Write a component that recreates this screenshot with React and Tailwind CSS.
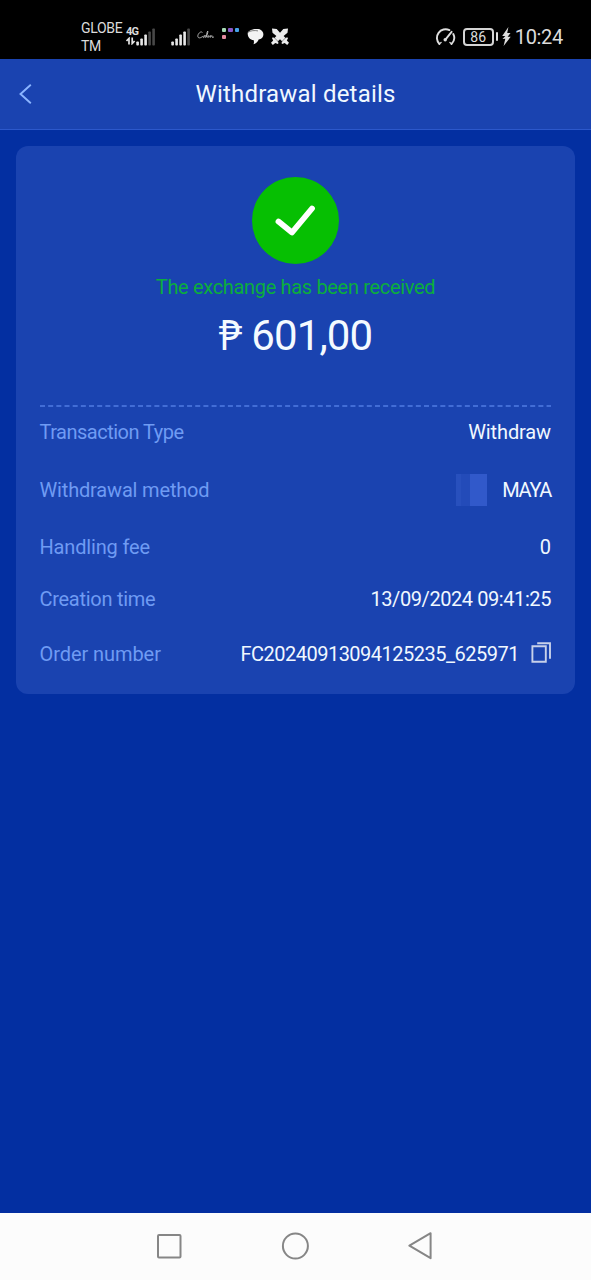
const rows = [
  { label: 'Transaction Type', value: 'Withdraw', height: 'h-[50px]', labelTracking: 'tracking-[-0.5px]', valueTracking: 'tracking-[-0.12px]' },
  { label: 'Withdrawal method', value: 'MAYA', height: 'h-[65px]', labelTracking: 'tracking-[-0.17px]', valueTracking: 'tracking-[-1.3px]', logo: true },
  { label: 'Handling fee', value: '0', height: 'h-[50px]', labelTracking: 'tracking-[-0.17px]', valueTracking: 'tracking-[0px]' },
  { label: 'Creation time', value: '13/09/2024 09:41:25', height: 'h-[53px]', labelTracking: 'tracking-[-0.28px]', valueTracking: 'tracking-[-0.42px]' },
  { label: 'Order number', value: 'FC20240913094125235_625971', height: 'h-[57px]', labelTracking: 'tracking-[-0.07px]', valueTracking: 'tracking-[-0.5px]', copy: true },
]

export default function App() {
  return (
    <div className="flex flex-col w-[591px] h-[1280px] bg-[#032fa1] font-[Roboto,sans-serif] overflow-hidden">
      <StatusBar />
      <header className="grid grid-cols-[1fr_auto_1fr] items-center h-[71px] bg-[#1a43b0] border-b border-[#2c58cb]">
        <svg className="ml-[18px] w-[15px] h-5" viewBox="0 0 15 20" fill="none" stroke="#8bb5ff" strokeWidth="1.9">
          <path d="M12.8 .8 2.5 10l10.3 9.2" />
        </svg>
        <h1 className="text-2xl text-[#f0f8ff] tracking-[0.2px]">Withdrawal details</h1>
      </header>

      <main className="flex-1 px-4 pt-4">
        <section className="h-[548px] rounded-xl bg-[#1a43b0] px-6 pt-[31px]">
          <div className="flex flex-col items-center h-[228px]">
            <svg className="w-[87px] h-[87px] shrink-0" viewBox="0 0 87 87" fill="none">
              <circle cx="43.5" cy="43.5" r="43.5" fill="#06bf02" />
              <path d="M26.5 44.5 40 55.5l20-24" stroke="#fff" strokeWidth="5.8" strokeLinecap="round" strokeLinejoin="round" />
            </svg>
            <p className="mt-[9px] text-[20px] leading-[28px] tracking-[-0.33px] text-[#0bae3c] whitespace-nowrap">The exchange has been received</p>
            <p className="flex items-baseline gap-[9px] mt-[8px] text-[42px] leading-[50px] text-[#f4faff] whitespace-nowrap">
              <span className="font-['Noto_Sans',sans-serif] text-[41px] leading-[50px]">₱</span>
              <span className="tracking-[-0.9px]">601,00</span>
            </p>
          </div>
          <Dashes />
          {rows.map(r => <Row key={r.label} {...r} />)}
        </section>
      </main>

      <NavBar />
    </div>
  )
}

function Row({ label, value, height, labelTracking, valueTracking, logo, copy }) {
  return (
    <div className={`flex items-center justify-between text-[20px] whitespace-nowrap ${height}`}>
      <span className={`-ml-[0.5px] text-[#6f9bf3] ${labelTracking}`}>{label}</span>
      <div className="flex items-center text-[#f0f8ff]">
        {logo && (
          <span className="flex w-[31px] h-8 mr-[15px]">
            <span className="w-[5px] bg-[#2850bd]" />
            <span className="w-[9px] bg-[#234bb9]" />
            <span className="flex-1 bg-[#3159ca]" />
          </span>
        )}
        <span className={valueTracking}>{value}</span>
        {copy && (
          <svg className="ml-3 -mt-[2px] w-5 h-[21px]" viewBox="0 0 20 21" fill="none" stroke="#c7d1ea" strokeWidth="1.9">
            <path d="M1.4 4.3h13.4v15.4H1.4zM6.2 1.2H19v15.6" />
          </svg>
        )}
      </div>
    </div>
  )
}

function Dashes() {
  return (
    <svg className="block w-full h-[2px]" viewBox="0 0 511 2" preserveAspectRatio="none">
      <path d="M0 1h511" stroke="#507ce2" strokeWidth="1.5" strokeDasharray="5 3.17" />
    </svg>
  )
}

function StatusBar() {
  return (
    <div className="flex items-center h-[59px] shrink-0 bg-black text-[#dcdcdc] pt-[14px] pl-[81px] pr-[28px]">
      <div className="w-[43px] text-[14px] leading-[18px] tracking-[-0.3px]">
        <div>GLOBE</div>
        <div>TM</div>
      </div>
      <div className="w-3 -mt-[1px]">
        <div className="pl-[2px] text-[11px] leading-[10px] font-bold tracking-[-0.8px]">4G</div>
        <svg className="ml-[2px] w-[10px] h-[8px]" viewBox="0 0 10 8" fill="none" stroke="#e4e4e4" strokeWidth="1.7">
          <path d="M3 7.5v-6L.5 4M6.2 .5v6L8.6 4" />
        </svg>
      </div>
      <Signal faded={2} />
      <div className="w-[15px]" />
      <Signal faded={1} />
      {/* Calm */}
      <svg className="ml-[6px] -mt-[3px] w-[18px] h-[10px]" viewBox="0 0 18 10" fill="none" stroke="#bdbdbd" strokeWidth=".9" strokeLinecap="round" strokeLinejoin="round">
        <path d="M5.2 2.2C4.6.6.8 3.2.8 6.2c.2 2.6 3 1.8 4.6.4M8.2 5.6c-1.2-.4-2.4.8-2 1.8.6.6 1.6-.4 2-1.8-.2 1.2 0 1.9.5 1.8C9.8 6.6 11.2 2 10.8 1c-.8.2-1.8 5.6-.8 6.4.8 0 1-1.8 1.7-1.8.4.2 0 1.2 0 1.8.5-.8 1-1.9 1.7-1.8.4.3 0 1.2 0 1.8.5-.8 1-1.9 1.7-1.7.4.4-.2 1.6.4 1.8.4 0 .8-.2 1.2-.5" />
      </svg>
      <div className="grid grid-cols-3 gap-x-[2px] gap-y-[3px] ml-[7px] -mt-[6px] w-[17px]">
        <span className="h-[4px] rounded-[1px] bg-[#a6d9b5]" />
        <span className="h-[4px] rounded-[1px] bg-[#8857c9]" />
        <span className="h-[4px] rounded-[1px] bg-[#45a2e8]" />
        <span className="h-[4px] rounded-[1px] bg-[#e58ba0]" />
      </div>
      <ChatIcon />
      <SwordsIcon />

      <div className="flex items-center ml-auto">
        <svg className="w-[21px] h-[18px]" viewBox="0 0 21 18" fill="none" stroke="#dedede" strokeWidth="1.9" strokeLinecap="round">
          <path d="M4.4 16A8.7 8.7 0 0 1 14.4 2.1M18.3 6a8.7 8.7 0 0 1-1.8 10" />
          <path d="m10.4 11.6 6.2-7.8" />
          <circle cx="10.2" cy="11.8" r="1.7" fill="#dedede" stroke="none" />
          <path d="m4.5 15.8 1.6-1.3M16.4 15.8l-1.5-1.3" strokeWidth="1.3" />
        </svg>
        <div className="flex items-center justify-center ml-[7px] w-[31px] h-[18px] rounded-[4px] border-2 border-[#d4d4d4] text-[14px] leading-[14px]">86</div>
        <span className="ml-[2px] w-[2px] h-[9px] rounded-full bg-[#dedede]" />
        <svg className="ml-[4px] w-[9px] h-[19px]" viewBox="0 0 9 19" fill="#dedede">
          <path d="M6.4 0 .2 9h3.1L.5 12l2.8-.3L1.6 19 8.7 9.8H5.6L8.5 6H5.2z" />
        </svg>
        <span className="ml-[4px] text-[20px] leading-6 tracking-[-0.3px]">10:24</span>
      </div>
    </div>
  )
}

function Signal({ faded }) {
  const bars = [4, 7, 11, 14, 17]
  return (
    <svg className="w-5 h-[18px]" viewBox="0 0 20 18">
      {bars.map((h, i) => (
        <rect key={i} x={i * 4 + 0.3} y={17.5 - h} width="2.6" height={h} rx=".8" fill={i >= 5 - faded ? '#484848' : '#e8e8e8'} />
      ))}
    </svg>
  )
}

function ChatIcon() {
  return (
    <svg className="ml-[8px] w-[17px] h-[17px]" viewBox="0 0 17 17">
      <path d="M.8 4.6C1.8 1.8 8.8.2 12.6 1.3c4 1.4 4.8 6 2.6 8.4-1.1 1.1-2.5 1.6-3.6 1.8-.4 2-2.2 3.7-5.1 4.7.7-1.5.6-2.9 0-4.2C3 11.8.2 8.6.8 4.6z" fill="#f3f3f3" />
      <path d="M1 4.4c2.2-1.9 6.8-2.2 10-1.5" fill="none" stroke="#333" strokeWidth=".6" />
    </svg>
  )
}

function SwordsIcon() {
  return (
    <svg className="ml-[7px] -mt-[1px] w-[18px] h-[17px]" viewBox="0 0 18 17" fill="#ececec">
      <path d="M1 .4 5.7 1 9 4.8 12.3 1 17 .4l-.5 4.3L12.6 8l2 2 1.6-.8.8 1-1.2 2.3L18 14.8 16.2 17 13.7 15l-2.5 1-.8-1 .9-1.5L9 11.3l-2.3 2.2.9 1.5-.8 1-2.5-1-2.5 2L0 14.8l2.2-2.3L1 10.2l.8-1 1.6.8 2-2L1.5 4.7z" />
      <path d="m3.6 10 4.3 4.3M14.4 10l-4.3 4.3" stroke="#333" strokeWidth=".5" />
    </svg>
  )
}

function NavBar() {
  return (
    <nav className="flex items-center h-[67px] shrink-0 bg-[#fcfcfc] pl-[156px] pb-[2px]">
      <svg className="w-[26px] h-[26px]" viewBox="0 0 26 26" fill="none" stroke="#868686" strokeWidth="2">
        <rect x="2" y="2" width="22.5" height="22.5" rx="1" />
      </svg>
      <svg className="ml-[99px] w-7 h-7" viewBox="0 0 28 28" fill="none" stroke="#868686" strokeWidth="2">
        <circle cx="14.4" cy="14" r="12.5" />
      </svg>
      <svg className="ml-[99px] w-[25px] h-7" viewBox="0 0 25 28" fill="none" stroke="#868686" strokeWidth="2" strokeLinejoin="round">
        <path d="M1.4 13.6 22.6 1.2v25z" />
      </svg>
    </nav>
  )
}
